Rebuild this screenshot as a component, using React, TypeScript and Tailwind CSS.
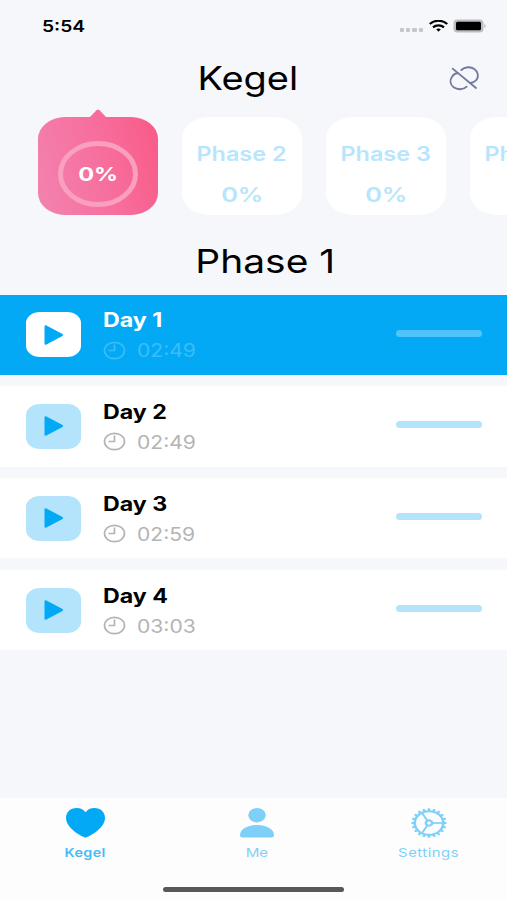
import React from 'react'
import clsx from 'clsx'

const phases = [
  { id: 2, name: 'Phase 2', progress: 0 },
  { id: 3, name: 'Phase 3', progress: 0 },
  { id: 4, name: 'Phase 4', progress: 0 }
]

const days = [
  { id: 1, name: 'Day 1', time: '02:49' },
  { id: 2, name: 'Day 2', time: '02:49' },
  { id: 3, name: 'Day 3', time: '02:59' },
  { id: 4, name: 'Day 4', time: '03:03' }
]

export default function App() {
  return (
    <div className="flex h-[900px] w-[507px] flex-col overflow-hidden bg-[#f5f7fb] font-['Inter',sans-serif] text-black">
      <StatusBar />
      <Header />
      <PhaseTabs />
      <h2 className="mt-[26px] flex h-10 justify-center pl-6 text-[33px] leading-10">
        <Wide className="origin-center scale-x-[1.18]">Phase 1</Wide>
      </h2>
      <div className="mt-[13.5px] flex flex-1 flex-col gap-[11.4px]">
        {days.map(day => (
          <DayRow key={day.id} day={day} active={day.id === 1} />
        ))}
      </div>
      <TabBar />
    </div>
  )
}

function Wide({ className, children }: { className?: string; children: React.ReactNode }) {
  return <span className={clsx('inline-block whitespace-nowrap', className)}>{children}</span>
}

function StatusBar() {
  return (
    <div className="flex h-[52px] items-center justify-between pr-[21px] pl-[42px]">
      <Wide className="origin-left scale-x-[1.2] text-base font-semibold">5:54</Wide>
      <div className="flex items-center">
        <div className="mt-2 mr-[6px] flex gap-[2px]">
          {[0, 1, 2, 3].map(i => (
            <span key={i} className="h-1 w-[4.3px] rounded-[1px] bg-[#c6c7ca]" />
          ))}
        </div>
        <svg className="mr-[5px] h-3 w-[19px]" viewBox="0 0 57 36" fill="none" stroke="#000" strokeWidth="6.5">
          <path d="M2 12C17-1 40-1 55 12" />
          <path d="M12 22c9-8 24-8 33 0" />
          <path d="M28.5 35l-7-7c4-3.500 10-3.500 14 0z" fill="#000" stroke="none" />
        </svg>
        <svg className="h-[14px] w-[33px]" viewBox="0 0 33 14">
          <rect x="0.500" y="0.500" width="30" height="13" rx="4" fill="#bdbdbf" />
          <rect x="3" y="2.700" width="25" height="8.600" rx="1.500" fill="#000" />
          <path d="M31.500 5c1.400.6 1.400 3.400 0 4z" fill="#aaa" />
        </svg>
      </div>
    </div>
  )
}

function Header() {
  return (
    <header className="grid h-[52px] grid-cols-[1fr_auto_1fr] items-center pr-[27px] pl-4">
      <span />
      <h1 className="text-[33px] leading-10">
        <Wide className="scale-x-[1.15]">Kegel</Wide>
      </h1>
      <svg className="h-[26px] w-[31px] justify-self-end" viewBox="585 195 93 78" fill="none" stroke="#74789a" strokeWidth="5.500" strokeLinecap="round">
        <path d="M596 206L666 264" />
        <path d="M622 210C632 200 650 199 661 207C673 216 675 230 667 240C663 245 658 248 649 249" />
        <path d="M638 260C628 270 610 270 599 262C588 253 587 240 594 230C598 224 604 220 611 219" />
      </svg>
    </header>
  )
}

function PhaseTabs() {
  return (
    <div className="mt-[13px] flex shrink-0 gap-6 pl-[38px]">
      <div className="relative flex h-[98px] w-[120px] shrink-0 items-center justify-center rounded-[27px/22px] bg-linear-[75deg,#f283b0,#f76c9b_60%,#f95a86]">
        <svg className="absolute -top-2 left-[51px] h-[9px] w-[18px]" viewBox="0 0 18 9">
          <path d="M0 9L7.500 1.200Q9-.3 10.500 1.200L18 9z" fill="#f76c9b" />
        </svg>
        <svg className="absolute top-6 left-[18.5px] h-[66px] w-[82px]" viewBox="0 0 82 66">
          <ellipse cx="41" cy="33" rx="37.500" ry="30.500" fill="none" stroke="#fa9fbe" strokeWidth="5" />
        </svg>
        <Wide className="relative top-[9px] scale-x-[1.24] text-[19px] font-bold text-white">0%</Wide>
      </div>
      {phases.map(phase => (
        <div key={phase.id} className="flex h-[98px] w-[120px] shrink-0 flex-col items-center rounded-[27px/22px] bg-white pt-[23px] text-[19.5px] font-semibold text-[#b7e5fd]">
          <Wide className="h-[41px] scale-x-[1.2] leading-[28px]">{phase.name}</Wide>
          <Wide className="scale-x-[1.3] leading-[28px]">{phase.progress}%</Wide>
        </div>
      ))}
    </div>
  )
}

function DayRow({ day, active }: { day: any; active: boolean }) {
  return (
    <div className={clsx('flex h-[80.4px] items-center pr-[25px] pl-[25.5px]', active ? 'bg-[#03a9f5]' : 'bg-white')}>
      <div className={clsx('flex h-[45px] w-[55px] items-center justify-center rounded-[14px/11px]', active ? 'bg-white' : 'bg-[#b3e4fb]')}>
        <svg className="ml-0.5 h-[22px] w-5" viewBox="0 0 20 22">
          <path d="M1.500 2.200v17.600L18 11z" fill="#03a9f5" stroke="#03a9f5" strokeWidth="2" strokeLinejoin="round" />
        </svg>
      </div>
      <div className="ml-[22.5px] flex flex-1 flex-col pt-px">
        <Wide className={clsx('origin-left scale-x-[1.19] self-start text-[19.5px] leading-[28px] font-bold', active && 'text-white')}>
          {day.name}
        </Wide>
        <div className={clsx('mt-[2px] flex items-center', active ? 'text-[#3bbdf9]' : 'text-[#b4b4b4]')}>
          <svg className="h-[19px] w-[23px]" viewBox="0 0 23 19" fill="none" stroke="currentColor" strokeWidth="1.700">
            <ellipse cx="11.500" cy="9.500" rx="10" ry="8.200" />
            <path d="M11.500 3.500v6H5.500" />
          </svg>
          <Wide className="ml-[11px] origin-left scale-x-[1.14] text-[18.500px] leading-[28px]">{day.time}</Wide>
        </div>
      </div>
      <div className={clsx('mb-[3px] h-[7px] w-[86px] rounded-full', active ? 'bg-[#4fc3fa]' : 'bg-[#b3e4fb]')} />
    </div>
  )
}

function GearIcon() {
  const teeth = Array.from({ length: 20 }, (_, i) => i * 18)
  return (
    <svg className="h-[30px] w-9" viewBox="-18 -18 36 36" preserveAspectRatio="none" fill="none" stroke="#7fd0f8" strokeWidth="2.500">
      <circle r="14.200" />
      <circle r="3.200" />
      {teeth.map(a => (
        <path key={a} d="M14-1.700L17.700-1V1L14 1.700z" transform={`rotate(${a})`} fill="#7fd0f8" stroke="none" />
      ))}
      {[0, 120, 240].map(a => (
        <path key={a} d="M3.500 0H14" transform={`rotate(${a})`} strokeWidth="2" />
      ))}
    </svg>
  )
}

function TabBar() {
  return (
    <nav className="flex h-[102.500px] shrink-0 flex-col items-center bg-[#fdfdfe]">
      <div className="-ml-px grid w-[516px] grid-cols-3 self-start pt-[10px] text-[12px] text-[#7fd0f8]">
        <div className="flex flex-col items-center">
          <svg className="h-[30px] w-[39px]" viewBox="0 0 39 30">
            <path d="M19.500 29.500C17 29.500 0 20.500 0 10C0 4 4.500 0 10.500 0C14.500 0 17.500 1.500 19.500 4.300C21.500 1.500 24.500 0 28.500 0C34.500 0 39 4 39 10C39 20.500 22 29.500 19.500 29.500z" fill="#03a9f5" />
          </svg>
          <Wide className="mt-[5px] scale-x-[1.2] leading-[20px] font-semibold tracking-[0.3px] text-[#45bcf7]">Kegel</Wide>
        </div>
        <div className="flex flex-col items-center">
          <svg className="h-[30px] w-[34px]" viewBox="0 0 34 30" fill="#7fd0f8">
            <ellipse cx="17" cy="7.200" rx="8.700" ry="7.200" />
            <path d="M0 27C0 21.500 7 17 17 17S34 21.500 34 27C34 28.800 33 29.500 31.500 29.500H2.500C1 29.500 0 28.800 0 27z" />
          </svg>
          <Wide className="mt-[5px] scale-x-[1.26] leading-[20px]">Me</Wide>
        </div>
        <div className="flex flex-col items-center">
          <GearIcon />
          <Wide className="mt-[5px] scale-x-[1.24] leading-[20px] tracking-[0.400px]">Settings</Wide>
        </div>
      </div>
      <div className="mt-[24.500px] h-[5px] w-[181px] rounded-full bg-[#595959]" />
    </nav>
  )
}
